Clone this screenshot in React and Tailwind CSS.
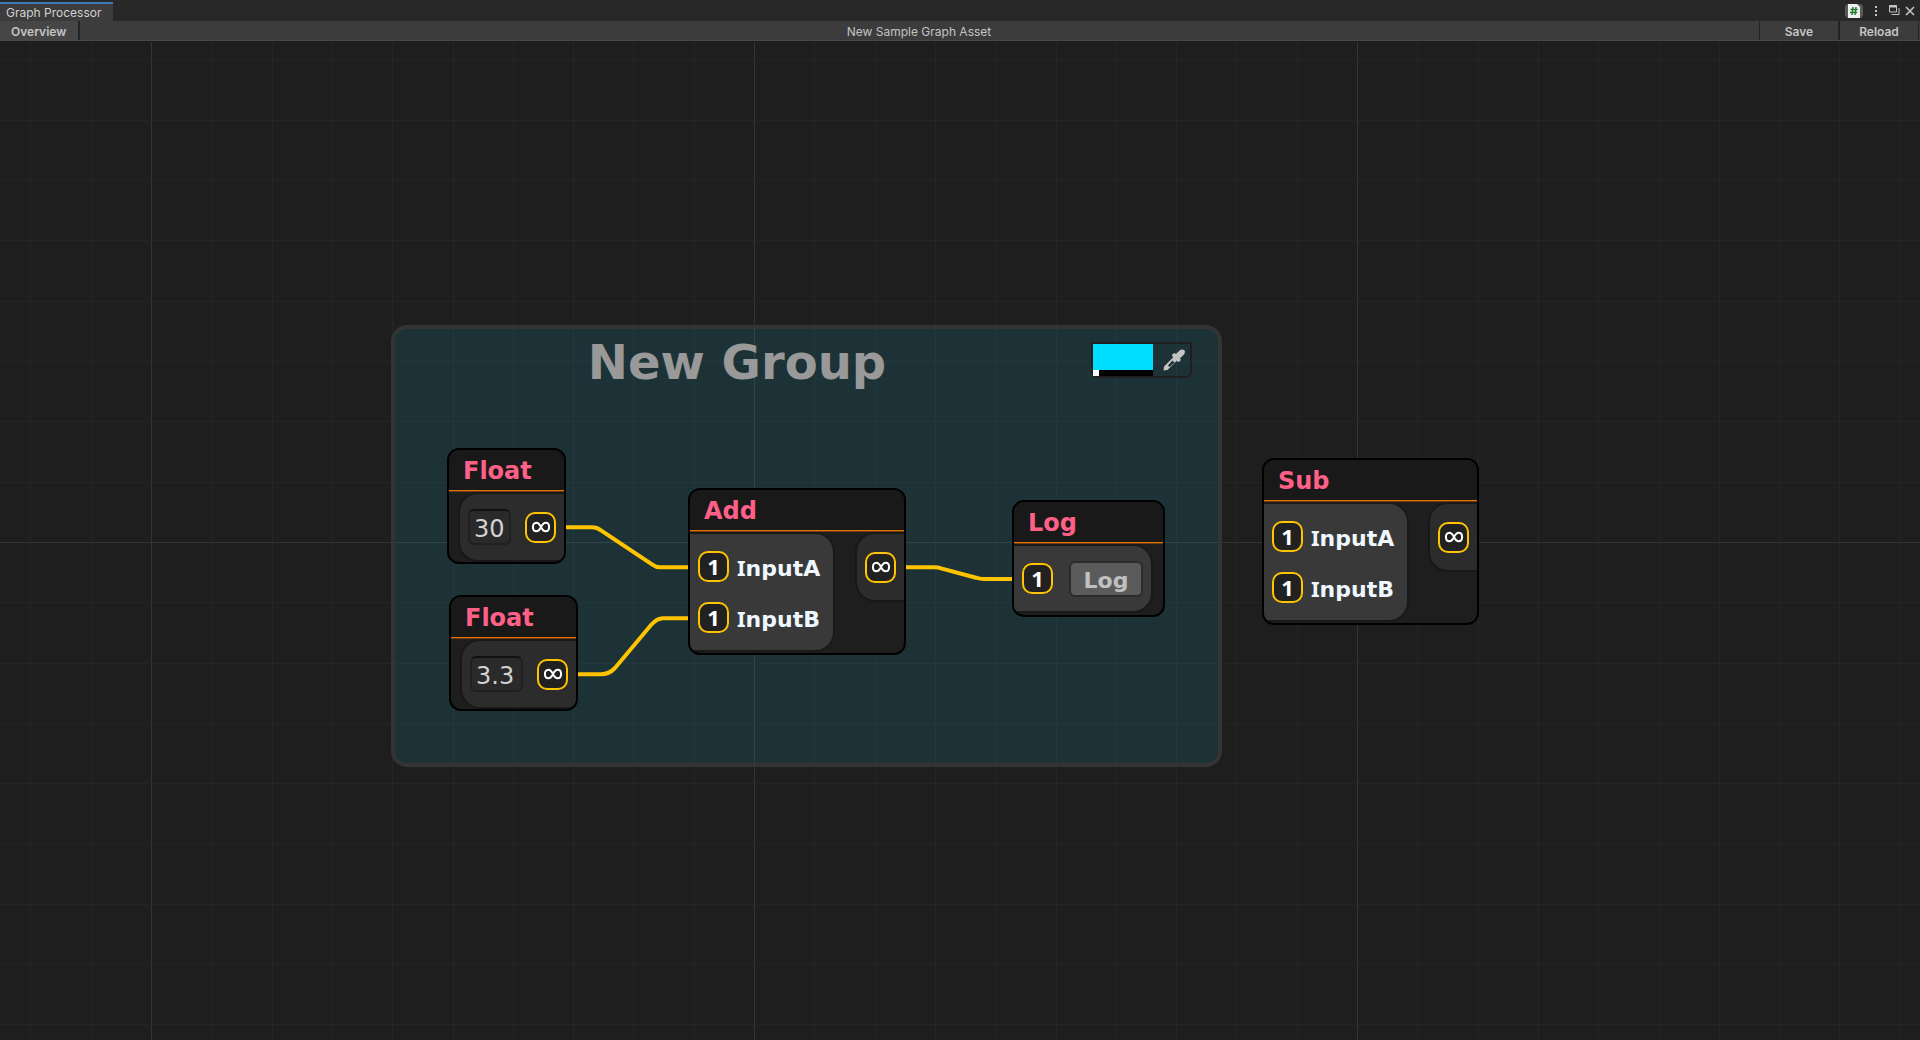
const GRID_STEP = 60.3;

const verticalLines = Array.from({ length: 64 }, (_, i) => ({
  pos: Math.round(151 + (i - 2) * GRID_STEP),
  major: (i - 2) % 10 === 0,
}));
const horizontalLines = Array.from({ length: 34 }, (_, i) => ({
  pos: Math.round(17.6 + i * GRID_STEP),
  major: i % 10 === 8,
}));

function Grid() {
  return (
    <svg className="absolute inset-0 size-full" shapeRendering="crispEdges" aria-hidden="true">
      {verticalLines.map((l) => (
        <rect key={'v' + l.pos} x={l.pos} y="0" width="1" height="100%" fill={l.major ? '#343434' : '#252525'} />
      ))}
      {horizontalLines.map((l) => (
        <rect key={'h' + l.pos} x="0" y={l.pos} width="100%" height="1" fill={l.major ? '#343434' : '#252525'} />
      ))}
    </svg>
  );
}

function Edges() {
  return (
    <svg className="pointer-events-none absolute inset-0 size-full" fill="none" stroke="#ffc400" strokeWidth="4" aria-hidden="true">
      <path d="M565 485.300H592Q597 485.300 601 488.300L652 522.300Q656 525.300 660 525.300H690" />
      <path d="M577 632.300H601Q609 632.300 615 626L651 583Q657 576.300 663 576.300H690" />
      <path d="M905 525.300H934Q938 525.300 942 526.600L976 535.700Q980 537 984 537H1014" />
    </svg>
  );
}

function Port({ multi, label }) {
  return (
    <button
      type="button"
      aria-label={label}
      className="flex size-[31px] shrink-0 items-center justify-center rounded-[10px] border-2 border-[#ffc400] bg-[#212121] font-['Open_Sans',sans-serif] text-[22px] leading-none font-bold text-white"
    >
      {multi ? (
        <svg width="20" height="12" viewBox="0 0 20 12" fill="none" stroke="#fff" strokeWidth="2">
          <path d="M10 6C8.600 3.200 7.300 1.700 5.400 1.700C3.300 1.700 1.900 3.600 1.900 6S3.300 10.300 5.400 10.300C7.300 10.300 8.600 8.800 10 6C11.400 3.200 12.700 1.700 14.600 1.700C16.700 1.700 18.100 3.600 18.100 6S16.700 10.300 14.600 10.300C12.700 10.300 11.400 8.800 10 6Z" />
        </svg>
      ) : (
        <span className="pb-[2px]">1</span>
      )}
    </button>
  );
}

function Node({ title, place, children }) {
  return (
    <article className={`absolute flex flex-col overflow-hidden rounded-xl border-2 border-black bg-[#1e1e1e] ${place}`}>
      <h3 className="h-10 bg-[#191919] pl-[14px] text-2xl leading-[42px] font-bold text-[#ff6088]">{title}</h3>
      <div className="h-[2px] shrink-0 border-b border-[#6b3c10] bg-[#e67300]" />
      <div className="flex justify-between">{children}</div>
    </article>
  );
}

function InputPanel({ children }) {
  return (
    <div className="flex flex-col gap-5 rounded-r-[20px] border-y-2 border-r-2 border-[#191919] bg-[#393939] py-[17px] pr-2 pl-2">
      {children}
    </div>
  );
}

function OutputPanel({ children }) {
  return (
    <div className="ml-auto flex h-[70px] items-center rounded-l-[20px] border-y-2 border-l-2 border-[#181818] bg-[#2c2c2c] pr-2 pl-2">
      {children}
    </div>
  );
}

function InputRow({ letter }) {
  return (
    <div className="flex h-[31px] items-center gap-2">
      <Port label={`Input${letter} port`} />
      <span className="w-[88px] pt-[2px] text-[22px] leading-none font-bold whitespace-nowrap text-[#f0f8ff]">
        <span className="font-['Noto_Sans',sans-serif] leading-none">I</span>nput{letter}
      </span>
    </div>
  );
}

function FloatNode({ place, value, fieldWidth }) {
  return (
    <Node title="Float" place={place}>
      <OutputPanel>
        <input
          aria-label="Float value"
          defaultValue={value}
          className={`mr-[14px] h-9 rounded-md border-2 border-[#202020] border-t-[#111] bg-[#2a2a2a] pt-1 pl-1 text-2xl text-[#d2d2d2] outline-none ${fieldWidth}`}
        />
        <Port multi label="Output port" />
      </OutputPanel>
    </Node>
  );
}

function MathNode({ title, place }) {
  return (
    <Node title={title} place={place}>
      <InputPanel>
        <InputRow letter="A" />
        <InputRow letter="B" />
      </InputPanel>
      <OutputPanel>
        <Port multi label="Output port" />
      </OutputPanel>
    </Node>
  );
}

function Group() {
  return (
    <section className="absolute top-[283px] left-[391px] h-[442px] w-[831px] rounded-2xl border-4 border-[#343434] bg-[#14dcff]/11">
      <header className="flex items-start justify-between pt-[13px] pr-[26px]">
        <h2 className="-mt-[10px] flex-1 pr-3 text-center text-5xl leading-[60px] font-bold text-[#999]">New Group</h2>
        <div className="flex h-9 w-[101px] rounded-b-md border-2 border-[#1f1f1f]">
          <button type="button" aria-label="Group color" className="flex w-[60px] flex-col bg-[#00ddff]">
            <span className="mt-auto flex h-[6px] w-full bg-black">
              <span className="h-full w-[6px] bg-white" />
            </span>
          </button>
          <button type="button" aria-label="Pick color" className="flex flex-1 items-center justify-center pl-1">
            <svg width="22" height="22" viewBox="0 0 22 22" fill="#c4c4c4">
              <path fillRule="evenodd" d="M0.500 21.500L1 17.500L10.500 8L14 11.500L4.500 21ZM5 16.500L6.500 18L11.500 13.500L9.500 11.500Z" />
              <path d="M9 5.500L11.500 4L13 5L16.500 1.500C18 0.300 20 0.300 21.300 1.300S21.800 4.500 20.500 6L17 9.300L17.800 11L16 13L14.500 12.500L9.500 7.500Z" />
            </svg>
          </button>
        </div>
      </header>
    </section>
  );
}

export default function App() {
  return (
    <div className="flex h-screen flex-col overflow-hidden bg-[#1e1e1e] font-['DejaVu_Sans',sans-serif]">
      <div className="flex h-[21px] shrink-0 items-stretch justify-between bg-[#282828] pt-[2px] font-[Inter,sans-serif]">
        <button type="button" className="flex w-[113px] items-center border-t-2 border-[#3a79bb] bg-[#3c3c3c] pl-[6px] text-xs leading-none text-[#d2d2d2]">
          Graph Processor
        </button>
        <div className="-mt-[2px] flex items-center pr-[5px] text-[#c4c4c4]">
          <button type="button" aria-label="Open script" className="mr-[11px] flex h-[14px] w-[18px] items-center justify-center rounded-sm bg-[#585858]">
            <svg width="12" height="14" viewBox="0 0 12 14">
              <path d="M0 0H9L12 3V14H0Z" fill="#f0f0f0" />
              <path d="M5 3L4 11M8 3L7 11M2.500 5.500H9.700M2 8.500H9.200" stroke="#1d7a2c" strokeWidth="1.400" />
            </svg>
          </button>
          <button type="button" aria-label="More options" className="mr-[11px]">
            <svg width="4" height="12" viewBox="0 0 4 12" fill="currentColor">
              <path d="M1 1h2v2H1zM1 5h2v2H1zM1 9h2v2H1z" />
            </svg>
          </button>
          <button type="button" aria-label="Maximize" className="mr-[5px]">
            <svg width="11" height="11" viewBox="0 0 11 11" fill="none" stroke="currentColor">
              <path d="M0.500 0.500h7v6.500h-7z" />
              <path d="M0 1.500h8" strokeWidth="2" />
              <path d="M10 3v6.500H2.500" />
            </svg>
          </button>
          <button type="button" aria-label="Close">
            <svg width="10" height="10" viewBox="0 0 10 10" stroke="currentColor" strokeWidth="1.600">
              <path d="M1 1l8 8M9 1l-8 8" />
            </svg>
          </button>
        </div>
      </div>

      <div className="flex h-5 shrink-0 items-stretch border-b border-[#484848] bg-[#3c3c3c] pr-px font-[Inter,sans-serif] text-xs leading-[21px] text-[#c4c4c4]">
        <button type="button" className="w-[80px] border-r-2 border-[#232323] bg-[#464646] pl-[11px] text-left font-semibold">
          Overview
        </button>
        <h1 className="flex-1 pr-px text-center">New Sample Graph Asset</h1>
        <button type="button" className="w-[79px] border-l border-[#232323] font-semibold">
          Save
        </button>
        <button type="button" className="w-[81px] border-r border-l-2 border-[#232323] font-semibold">
          Reload
        </button>
      </div>

      <main className="relative mt-px flex-1 overflow-hidden">
        <Grid />
        <Group />
        <Edges />
        <FloatNode place="top-[406px] left-[447px] w-[119px] h-[116px]" value="30" fieldWidth="w-[43px]" />
        <FloatNode place="top-[553px] left-[449px] w-[129px] h-[116px]" value="3.3" fieldWidth="w-[53px]" />
        <MathNode title="Add" place="top-[446px] left-[688px] w-[218px] h-[167px]" />
        <Node title="Log" place="top-[458px] left-[1012px] w-[153px] h-[117px]">
          <InputPanel>
            <div className="flex h-[31px] items-center gap-4">
              <Port label="Log input port" />
              <button type="button" className="h-9 w-[74px] rounded-md border-2 border-[#2c2c2c] bg-[#5b5b5b] pt-1 text-[22px] leading-none font-bold text-[#c0c0c0]">
                Log
              </button>
            </div>
          </InputPanel>
        </Node>
        <MathNode title="Sub" place="top-[416px] left-[1262px] w-[217px] h-[167px]" />
      </main>
    </div>
  );
}
